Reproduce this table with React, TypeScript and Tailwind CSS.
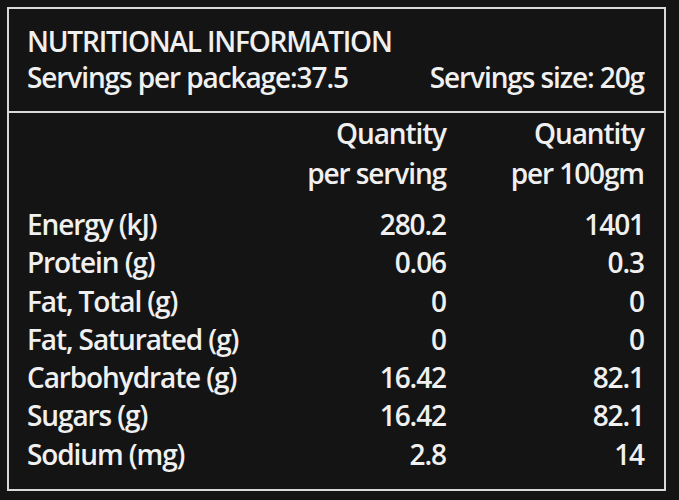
const rows: [string, string, string][] = [
  ['Energy (kJ)', '280.2', '1401'],
  ['Protein (g)', '0.06', '0.3'],
  ['Fat, Total (g)', '0', '0'],
  ['Fat, Saturated (g)', '0', '0'],
  ['Carbohydrate (g)', '16.42', '82.1'],
  ['Sugars (g)', '16.42', '82.1'],
  ['Sodium (mg)', '2.8', '14'],
];

export default function App() {
  return (
    <div className="h-[500px] w-[679px] overflow-hidden bg-[#141414] pl-[7px] pt-[7px] font-['Open_Sans',sans-serif] font-semibold text-[#f0f0f0]">
      <div className="h-[484px] w-[659px] border-2 border-[#d9d9d9]">
        <div className="h-[104px] border-b-2 border-[#d9d9d9] pl-[18px] pr-[20px] pt-[14px]">
          <h1 className="text-[28px] leading-[36px] tracking-[-1.2px]">NUTRITIONAL INFORMATION</h1>
          <div className="flex justify-between text-[28px] leading-[36px] tracking-[-1.1px]">
            <span>Servings per package:37.5</span>
            <span>Servings size: 20g</span>
          </div>
        </div>

        <div className="pl-[18px] pr-[20px] pt-0 text-[28px] tracking-[-1.1px]">
          <div className="flex leading-[40px]">
            <div className="flex-1" />
            <div className="w-[200px] text-right">
              Quantity
              <br />
              per serving
            </div>
            <div className="w-[198px] text-right">
              Quantity
              <br />
              per 100gm
            </div>
          </div>
          <div className="mt-[12px]">
            {rows.map(([label, serving, per100]) => (
              <div key={label} className="flex leading-[38.3px]">
                <span className="flex-1">{label}</span>
                <span className="w-[150px] text-right">{serving}</span>
                <span className="w-[198px] text-right">{per100}</span>
              </div>
            ))}
          </div>
        </div>
      </div>
    </div>
  );
}
